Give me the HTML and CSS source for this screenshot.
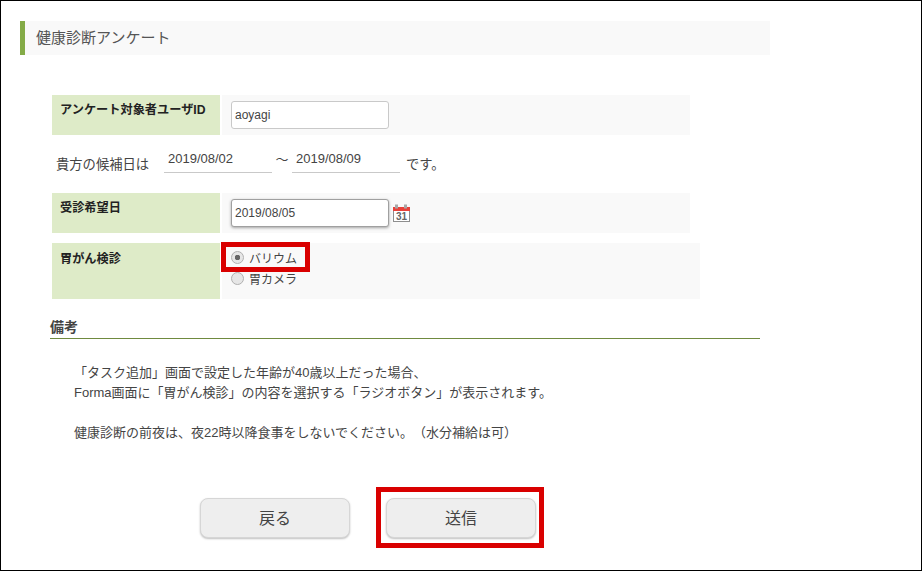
FILE: index.html
```html
<!DOCTYPE html>
<html lang="ja">
<head>
<meta charset="utf-8">
<title>健康診断アンケート</title>
<link rel="stylesheet" href="styles.css">
</head>
<body>
<div class="frame">
  <h1 class="title">健康診断アンケート</h1>
  <section class="form">
    <div class="row row-id">
      <div class="label">アンケート対象者ユーザID</div>
      <div class="value"><input class="text" type="text" value="aoyagi"></div>
    </div>
    <div class="range">
      <span class="range-text">貴方の候補日は</span>
      <span class="date">2019/08/02</span>
      <span class="tilde">～</span>
      <span class="date">2019/08/09</span>
      <span class="range-end">です。</span>
    </div>
    <div class="row row-date">
      <div class="label">受診希望日</div>
      <div class="value">
        <input class="text focused" type="text" value="2019/08/05">
        <svg class="cal" width="18" height="19" viewBox="0 0 18 19">
          <rect x="0.5" y="3.5" width="16" height="14" fill="#fff" stroke="#8e8e8e"/>
          <rect x="0" y="3" width="17" height="4" fill="#e8413a"/>
          <rect x="2" y="0.5" width="3" height="4" fill="#a8a8a8"/>
          <rect x="11" y="0.5" width="3" height="4" fill="#a8a8a8"/>
          <text class="cal-num" x="8.5" y="16" text-anchor="middle">31</text>
        </svg>
      </div>
    </div>
    <div class="row row-radio">
      <div class="label">胃がん検診</div>
      <div class="value radios">
        <label class="radio"><span class="dot on"></span>バリウム</label>
        <label class="radio"><span class="dot"></span>胃カメラ</label>
      </div>
    </div>
  </section>
  <h2 class="notes-title">備考</h2>
  <div class="notes">
    <p>「タスク追加」画面で設定した年齢が40歳以上だった場合、</p>
    <p>Forma画面に「胃がん検診」の内容を選択する「ラジオボタン」が表示されます。</p>
    <p class="gap">健康診断の前夜は、夜22時以降食事をしないでください。（水分補給は可）</p>
  </div>
  <div class="buttons">
    <button class="btn" type="button">戻る</button>
    <button class="btn" type="button">送信</button>
  </div>
  <div class="mark mark-radio"></div>
  <div class="mark mark-send"></div>
</div>
</body>
</html>
```

FILE: styles.css
```css
* { box-sizing: border-box; }
html, body { margin: 0; padding: 0; background: #fff; }
body {
  width: 922px;
  height: 571px;
  overflow: hidden;
  font-family: "Liberation Sans", "Noto Sans CJK JP", sans-serif;
  font-size: 13px;
  color: #444;
  text-spacing-trim: space-all;
}
.frame {
  position: relative;
  width: 922px;
  height: 571px;
  border: 1px solid #000;
  padding: 20px 0 0 19px;
}
.title {
  width: 750px;
  height: 34px;
  margin: 0;
  padding-left: 11px;
  border-left: 5px solid #84ab47;
  background: #f9f9f9;
  font-size: 15px;
  font-weight: normal;
  line-height: 34px;
  color: #555;
}
.form { margin: 40px 0 0 32px; }
.row { display: flex; }
.label {
  width: 168px;
  padding: 6px 0 0 8px;
  background: #deebc8;
  font-size: 12.2px;
  font-weight: bold;
  line-height: 18px;
  color: #222;
}
.value {
  width: 468px;
  margin-left: 2px;
  padding: 6px 0 0 9px;
  background: #f9f9f9;
  display: flex;
  align-items: flex-start;
}
.row-id, .row-date { height: 40px; }
.text {
  width: 158px;
  height: 28px;
  padding: 0 3px;
  border: 1px solid #c9c9c9;
  border-radius: 3px;
  background: #fff;
  font-family: inherit;
  font-size: 12px;
  color: #444;
  outline: none;
}
.focused {
  border-color: #a0a0a0;
  box-shadow: 0 1px 3px rgba(0,0,0,.35);
}
.cal { margin: 5px 0 0 4px; }
.cal-num { font-family: "Liberation Sans", sans-serif; font-size: 10px; font-weight: bold; fill: #666; }
.range {
  display: flex;
  height: 58px;
  padding: 15px 0 0 4px;
  align-items: flex-start;
}
.range-text { padding-top: 5px; font-size: 13.3px; line-height: 19px; width: 108px; }
.date {
  width: 108px;
  height: 23px;
  padding-left: 4px;
  border-bottom: 1px solid #c9c9c9;
  font-size: 13px;
  line-height: 17px;
}
.tilde { width: 20px; padding-top: 0; text-align: center; line-height: 20px; }
.range-end { padding: 5px 0 0 6px; font-size: 13.3px; line-height: 19px; }
.row-radio { height: 56px; margin-top: 10px; }
.row-radio .label { padding-top: 7px; }
.row-radio .value { width: 478px; flex-direction: column; padding: 4px 0 0 9px; }
.radio {
  display: flex;
  align-items: center;
  height: 21px;
  font-size: 12px;
  color: #444;
}
.dot {
  width: 13px;
  height: 13px;
  margin-right: 5px;
  border: 1px solid #b0b0b0;
  border-radius: 50%;
  background: #e6e6e6;
}
.dot.on { background: radial-gradient(circle, #666 0 2.5px, #e6e6e6 3px); }
.notes-title {
  width: 710px;
  height: 29px;
  margin: 11px 0 0 30px;
  border-bottom: 1px solid #6f8a3f;
  font-size: 14px;
  font-weight: bold;
  line-height: 34px;
  color: #444;
}
.notes { margin: 24px 0 0 54px; line-height: 20px; font-size: 13px; color: #444; }
.notes p { margin: 0; }
.notes .gap { margin-top: 20px; }
.buttons { display: flex; gap: 36px; margin: 55px 0 0 180px; }
.btn {
  width: 150px;
  height: 40px;
  padding: 0 0 2px;
  border: 1px solid #d6d6d6;
  border-radius: 8px;
  background: #eee;
  box-shadow: 0 1px 2px rgba(0,0,0,.25);
  font-family: inherit;
  font-size: 16px;
  color: #444;
}
.mark { position: absolute; border: 5px solid #d90000; }
.mark-radio { left: 220px; top: 241px; width: 89px; height: 30px; }
.mark-send { left: 375px; top: 486px; width: 168px; height: 61px; }
```
